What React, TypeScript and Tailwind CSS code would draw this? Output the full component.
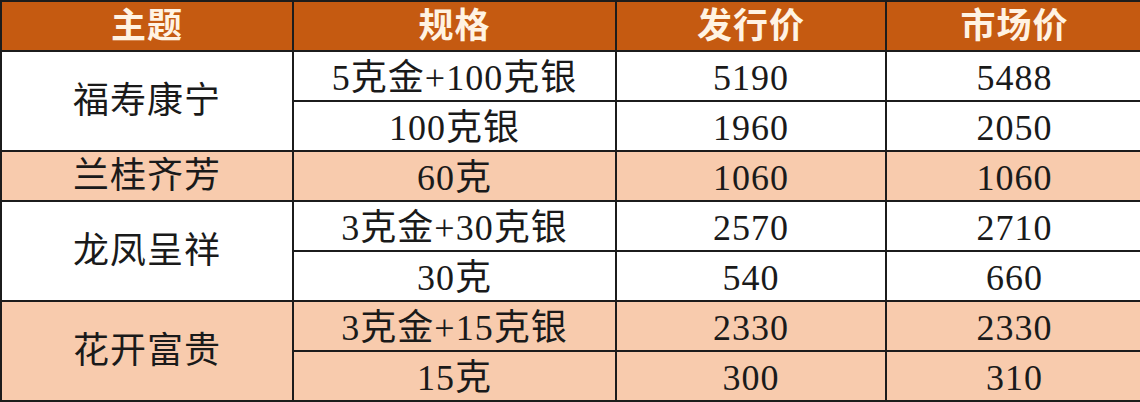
const rows = [
  {
    theme: "福寿康宁",
    bg: "bg-white",
    items: [
      ["5克金+100克银", "5190", "5488"],
      ["100克银", "1960", "2050"],
    ],
  },
  { theme: "兰桂齐芳", bg: "bg-[#f8cbad]", items: [["60克", "1060", "1060"]] },
  {
    theme: "龙凤呈祥",
    bg: "bg-white",
    items: [
      ["3克金+30克银", "2570", "2710"],
      ["30克", "540", "660"],
    ],
  },
  {
    theme: "花开富贵",
    bg: "bg-[#f8cbad]",
    items: [
      ["3克金+15克银", "2330", "2330"],
      ["15克", "300", "310"],
    ],
  },
];

const cell =
  "border-2 border-[#1c1c1c] text-center align-middle p-0 text-[36px] leading-none tracking-[1px] text-[#1a1a1a]";

export default function App() {
  return (
    <div
      className="w-[1140px] h-[402px] overflow-hidden bg-white"
      style={{ fontFamily: '"Liberation Serif", "Noto Sans CJK SC", serif' }}
    >
      <table className="border-collapse table-fixed w-[1142px]">
        <colgroup>
          <col className="w-[292px]" />
          <col className="w-[323px]" />
          <col className="w-[270px]" />
          <col className="w-[257px]" />
        </colgroup>
        <thead>
          <tr className="h-[50px] bg-[#c55a11]">
            {["主题", "规格", "发行价", "市场价"].map((h) => (
              <th
                key={h}
                className="border-2 border-[#1c1c1c] text-center align-middle p-0 text-[35px] leading-none font-bold text-[#fff3e3] tracking-[1px]"
              >
                {h}
              </th>
            ))}
          </tr>
        </thead>
        <tbody>
          {rows.map((g) =>
            g.items.map((it, i) => (
              <tr key={g.theme + i} className={`h-[50px] ${g.bg}`}>
                {i === 0 && (
                  <td rowSpan={g.items.length} className={cell}>
                    {g.theme}
                  </td>
                )}
                {it.map((v, j) => (
                  <td key={j} className={cell}>
                    <span className="relative top-[2px]">{v}</span>
                  </td>
                ))}
              </tr>
            ))
          )}
        </tbody>
      </table>
    </div>
  );
}
